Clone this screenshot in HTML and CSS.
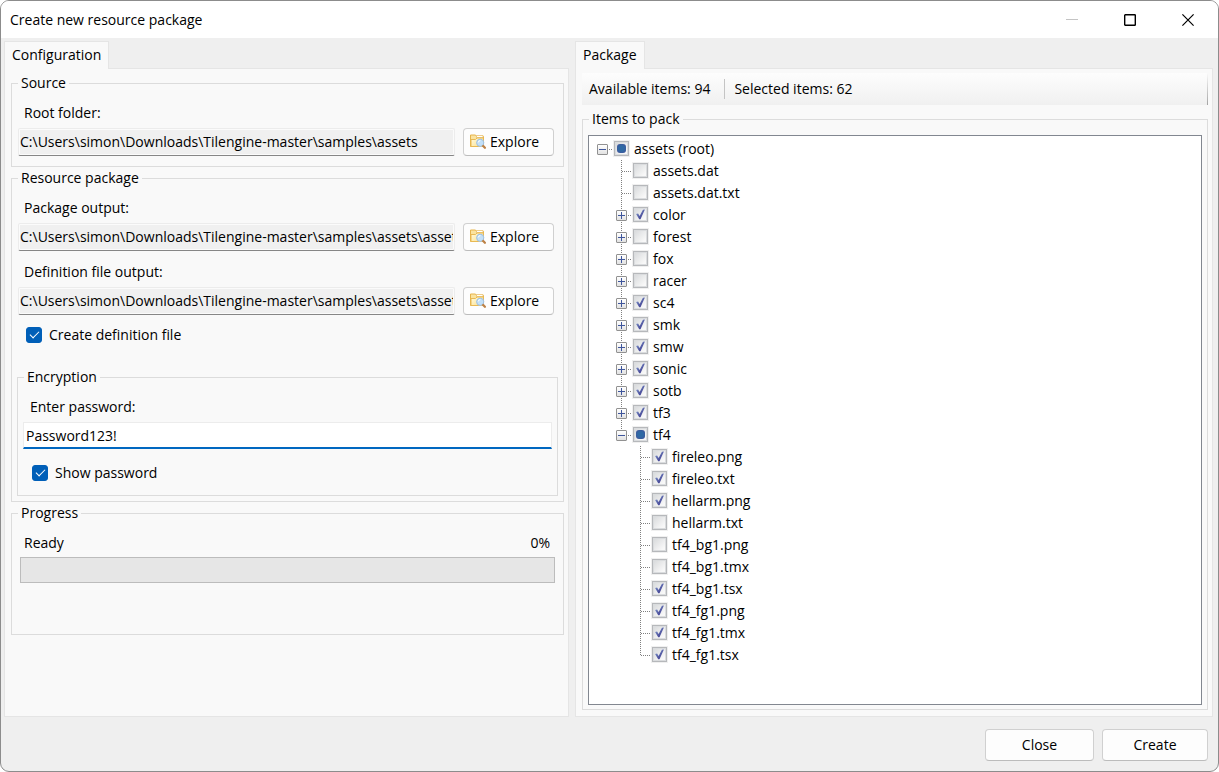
FILE: index.html
```html
<!DOCTYPE html>
<html lang="en">
<head>
<meta charset="utf-8">
<title>Create new resource package</title>
<link rel="stylesheet" href="styles.css">
</head>
<body>
<svg class="defs" aria-hidden="true">
  <defs>
    <linearGradient id="folder-fill" x1="0" y1="0" x2="1" y2="1">
      <stop offset="0" stop-color="#fffbe0"/>
      <stop offset="1" stop-color="#fbdf8c"/>
    </linearGradient>
  </defs>
  <symbol id="folder-search" viewBox="0 0 16 16">
    <path d="M.5 12.500v-11.500h5l1 1.500h7v10z" fill="#fae3a0" stroke="#e6b44c"/>
    <path d="M6.500 1.500h6.500v2h-6.500z" fill="#fff" stroke="#e6b95c" stroke-width=".7"/>
    <path d="M1 12.500V5.500h4.500l1.500-1.500h6.500v8.500z" fill="url(#folder-fill)" stroke="#e8b954"/>
    <circle cx="10.200" cy="8.800" r="3.600" fill="#c3e0f8" stroke="#9dbfe2"/>
    <path d="M8.300 8.400a2 2 0 0 1 2-1.800" fill="none" stroke="#fff"/>
    <path d="m13.200 12 1.700 1.800" stroke="#bd8248" stroke-width="2.200" stroke-linecap="round"/>
  </symbol>
</svg>

<div class="window">
  <header class="titlebar">
    <h1 class="title">Create new resource package</h1>
    <div class="caption">
      <button class="caption-button" aria-label="Minimize" disabled><svg width="12" height="12" viewBox="0 0 12 12"><path d="M0 5.500h12" stroke="#c4c4c4"/></svg></button>
      <button class="caption-button" aria-label="Maximize"><svg width="12" height="12" viewBox="0 0 12 12"><rect x=".7" y=".7" width="10.600" height="10.600" rx=".6" fill="none" stroke="#000" stroke-width="1.400"/></svg></button>
      <button class="caption-button" aria-label="Close window"><svg width="12" height="12" viewBox="0 0 12 12"><path d="m.4.4 11.200 11.200M11.600.4.4 11.600" stroke="#000" stroke-width="1.200"/></svg></button>
    </div>
  </header>

  <main class="panes">
    <section class="pane">
      <h2 class="tab">Configuration</h2>
      <div class="page">
        <fieldset class="group">
          <legend>Source</legend>
          <label class="field-label" for="root">Root folder:</label>
          <div class="field-row">
            <input class="path" id="root" type="text" readonly value="C:\Users\simon\Downloads\Tilengine-master\samples\assets">
            <button class="button explore"><svg class="icon"><use href="#folder-search"/></svg>Explore</button>
          </div>
        </fieldset>

        <fieldset class="group resource">
          <legend>Resource package</legend>
          <label class="field-label" for="output">Package output:</label>
          <div class="field-row">
            <input class="path" id="output" type="text" readonly value="C:\Users\simon\Downloads\Tilengine-master\samples\assets\assets.dat">
            <button class="button explore"><svg class="icon"><use href="#folder-search"/></svg>Explore</button>
          </div>
          <label class="field-label next" for="definition">Definition file output:</label>
          <div class="field-row">
            <input class="path" id="definition" type="text" readonly value="C:\Users\simon\Downloads\Tilengine-master\samples\assets\assets.dat.txt">
            <button class="button explore"><svg class="icon"><use href="#folder-search"/></svg>Explore</button>
          </div>
          <label class="option"><input class="tick" type="checkbox" checked>Create definition file</label>

          <fieldset class="group encryption">
            <legend>Encryption</legend>
            <label class="field-label" for="password">Enter password:</label>
            <div class="password-row"><input class="password" id="password" type="text" value="Password123!"></div>
            <label class="option"><input class="tick" type="checkbox" checked>Show password</label>
          </fieldset>
        </fieldset>

        <fieldset class="group progress">
          <legend>Progress</legend>
          <div class="progress-text"><label for="bar">Ready</label><span>0%</span></div>
          <div class="bar-row"><progress class="bar" id="bar" value="0" max="100"></progress></div>
        </fieldset>
      </div>
    </section>

    <section class="pane">
      <h2 class="tab">Package</h2>
      <div class="page">
        <div class="status"><span class="status-item">Available items: 94</span><span class="status-item">Selected items: 62</span></div>
        <fieldset class="group items">
          <legend>Items to pack</legend>
          <ul class="tree">
            <li class="node">
              <div class="row"><button class="toggle open" aria-label="Collapse assets"></button><label class="entry"><input class="mark partial" type="checkbox">assets (root)</label></div>
              <ul class="branch">
                <li class="node"><div class="row"><span class="stub"></span><label class="entry"><input class="mark" type="checkbox">assets.dat</label></div></li>
                <li class="node"><div class="row"><span class="stub"></span><label class="entry"><input class="mark" type="checkbox">assets.dat.txt</label></div></li>
                <li class="node"><div class="row"><button class="toggle" aria-label="Expand color"></button><label class="entry"><input class="mark" type="checkbox" checked>color</label></div></li>
                <li class="node"><div class="row"><button class="toggle" aria-label="Expand forest"></button><label class="entry"><input class="mark" type="checkbox">forest</label></div></li>
                <li class="node"><div class="row"><button class="toggle" aria-label="Expand fox"></button><label class="entry"><input class="mark" type="checkbox">fox</label></div></li>
                <li class="node"><div class="row"><button class="toggle" aria-label="Expand racer"></button><label class="entry"><input class="mark" type="checkbox">racer</label></div></li>
                <li class="node"><div class="row"><button class="toggle" aria-label="Expand sc4"></button><label class="entry"><input class="mark" type="checkbox" checked>sc4</label></div></li>
                <li class="node"><div class="row"><button class="toggle" aria-label="Expand smk"></button><label class="entry"><input class="mark" type="checkbox" checked>smk</label></div></li>
                <li class="node"><div class="row"><button class="toggle" aria-label="Expand smw"></button><label class="entry"><input class="mark" type="checkbox" checked>smw</label></div></li>
                <li class="node"><div class="row"><button class="toggle" aria-label="Expand sonic"></button><label class="entry"><input class="mark" type="checkbox" checked>sonic</label></div></li>
                <li class="node"><div class="row"><button class="toggle" aria-label="Expand sotb"></button><label class="entry"><input class="mark" type="checkbox" checked>sotb</label></div></li>
                <li class="node"><div class="row"><button class="toggle" aria-label="Expand tf3"></button><label class="entry"><input class="mark" type="checkbox" checked>tf3</label></div></li>
                <li class="node">
                  <div class="row"><button class="toggle open" aria-label="Collapse tf4"></button><label class="entry"><input class="mark partial" type="checkbox">tf4</label></div>
                  <ul class="branch">
                    <li class="node"><div class="row"><span class="stub"></span><label class="entry"><input class="mark" type="checkbox" checked>fireleo.png</label></div></li>
                    <li class="node"><div class="row"><span class="stub"></span><label class="entry"><input class="mark" type="checkbox" checked>fireleo.txt</label></div></li>
                    <li class="node"><div class="row"><span class="stub"></span><label class="entry"><input class="mark" type="checkbox" checked>hellarm.png</label></div></li>
                    <li class="node"><div class="row"><span class="stub"></span><label class="entry"><input class="mark" type="checkbox">hellarm.txt</label></div></li>
                    <li class="node"><div class="row"><span class="stub"></span><label class="entry"><input class="mark" type="checkbox">tf4_bg1.png</label></div></li>
                    <li class="node"><div class="row"><span class="stub"></span><label class="entry"><input class="mark" type="checkbox">tf4_bg1.tmx</label></div></li>
                    <li class="node"><div class="row"><span class="stub"></span><label class="entry"><input class="mark" type="checkbox" checked>tf4_bg1.tsx</label></div></li>
                    <li class="node"><div class="row"><span class="stub"></span><label class="entry"><input class="mark" type="checkbox" checked>tf4_fg1.png</label></div></li>
                    <li class="node"><div class="row"><span class="stub"></span><label class="entry"><input class="mark" type="checkbox" checked>tf4_fg1.tmx</label></div></li>
                    <li class="node"><div class="row"><span class="stub"></span><label class="entry"><input class="mark" type="checkbox" checked>tf4_fg1.tsx</label></div></li>
                  </ul>
                </li>
              </ul>
            </li>
          </ul>
        </fieldset>
      </div>
    </section>
  </main>

  <footer class="actions">
    <button class="button action">Close</button>
    <button class="button action">Create</button>
  </footer>
</div>
</body>
</html>
```
FILE: styles.css
```css
* { box-sizing: border-box; }

body {
  margin: 0;
  background: #fff;
  color: #000;
  font: 14px/20px "Segoe UI", "Open Sans", "Noto Sans", sans-serif;
}

button, input { font: inherit; color: inherit; }
h1, h2, ul { margin: 0; padding: 0; font: inherit; list-style: none; }

.defs { position: absolute; width: 0; height: 0; }

.window {
  display: flex;
  flex-direction: column;
  min-height: 100vh;
  border: 1px solid #8c8c8c;
  border-radius: 9px;
  background: #efefef;
  overflow: hidden;
}

/* Title bar */
.titlebar {
  display: flex;
  align-items: center;
  height: 37px;
  padding: 0 1px 0 9px;
  background: #fff;
}
.title { flex: 1; }
.caption { display: flex; }
.caption-button {
  display: grid;
  place-items: center;
  width: 58px;
  height: 36px;
  padding: 0;
  border: 0;
  background: none;
}

/* Tabbed panes */
.panes {
  flex: 1;
  display: grid;
  grid-template-columns: 565fr 638fr;
  gap: 6px;
  padding: 3px 5px 0 3px;
}
.pane { display: flex; flex-direction: column; min-width: 0; }
.tab {
  position: relative;
  z-index: 1;
  align-self: flex-start;
  height: 28px;
  margin-bottom: -1px;
  padding: 3px 7px 0;
  border: 1px solid #e5e5e5;
  border-bottom: 0;
  background: #f9f9f9;
}
.page {
  flex: 1;
  display: flex;
  flex-direction: column;
  padding: 4px 4px 6px 6px;
  border: 1px solid #e5e5e5;
  background: #f9f9f9;
}

/* Group boxes */
.group {
  min-width: 0;
  margin: 0 0 1px;
  padding: 10px 0;
  border: 1px solid #dcdcdc;
}
.group legend { margin-left: 6px; padding: 0 3px; }

.field-label { display: block; padding-left: 12px; margin-bottom: 5px; }
.field-label.next { margin-top: 11px; }
.field-row { display: flex; gap: 8px; padding: 0 9px 0 6px; }

.path, .password {
  flex: 1;
  min-width: 0;
  height: 28px;
  padding: 0 1px 1px;
  border: 1px solid #ececec;
  outline: 0;
}
.path {
  border-bottom-color: #868686;
  border-radius: 2px;
  background: #f0f0f0;
  box-shadow: inset 0 0 0 1px #fbfbfb;
}
.password-row { display: flex; padding: 0 5px; }
.password { height: 27px; border-bottom: 2px solid #0067c0; background: #fff; padding: 0 2px; }

.button {
  display: flex;
  align-items: center;
  justify-content: center;
  border: 1px solid #d0d0d0;
  border-bottom-color: #bcbcbc;
  border-radius: 4px;
  background: #fdfdfd;
}
.explore { width: 91px; gap: 4px; padding: 0 0 0 6px; justify-content: flex-start; }
.icon { width: 16px; height: 16px; }

.option {
  display: flex;
  align-items: center;
  gap: 7px;
  margin-top: 10px;
  padding-left: 14px;
}
.tick {
  display: grid;
  place-items: center;
  width: 16px;
  height: 16px;
  margin: 0;
  appearance: none;
  border: 1px solid #868686;
  border-radius: 3px;
  background: #fff;
}
.tick:checked { border-color: #005fb8; background: #005fb8; }
.tick:checked::before {
  content: "";
  width: 8px;
  height: 4px;
  margin-bottom: 3px;
  border: solid #fff;
  border-width: 0 0 1px 1px;
  transform: rotate(-45deg);
}

.resource { padding-bottom: 4px; }
.encryption { margin: 22px 5px 1px; padding-bottom: 12px; }
.encryption .option { margin-top: 14px; }

.progress { padding-bottom: 51px; }
.progress-text {
  display: flex;
  justify-content: space-between;
  padding: 0 13px 0 12px;
}
.bar-row { display: flex; padding: 4px 8px 0; }
.bar {
  flex: 1;
  height: 26px;
  appearance: none;
  border: 1px solid #bcbcbc;
  background: #e6e6e6;
}
.bar::-webkit-progress-bar { background: #e6e6e6; }
.bar::-webkit-progress-value { background: #06b025; }

/* Item counts */
.status {
  display: flex;
  align-items: center;
  height: 32px;
  margin-bottom: 4px;
  padding-left: 7px;
  border-right: 1px solid;
  border-image: linear-gradient(#fdfdfd, #a0a0a0) 1;
  background: linear-gradient(#fdfdfd, #f0f0f0);
}
.status-item + .status-item {
  margin-left: 14px;
  padding-left: 9px;
  border-left: 1px solid #c4c4c4;
}

/* Item tree */
.group.items { flex: 1; display: flex; padding: 6px 5px 4px; margin: 0; }
.items legend { margin-left: 1px; }
.tree {
  flex: 1;
  padding: 2px 8px 16px;
  border: 1px solid #828790;
  background: #fff;
}
.branch { padding-left: 19px; }
.node { position: relative; }
.branch > .node::before {
  content: "";
  position: absolute;
  top: 0;
  bottom: 0;
  left: 5px;
  width: 1px;
  background: repeating-linear-gradient(#808080 0 1px, #fff 1px 2px);
}
.branch > .node:last-child::before { bottom: auto; height: 12px; }
.row {
  display: flex;
  align-items: center;
  gap: 5px;
  height: 22px;
  background: repeating-linear-gradient(90deg, #808080 0 1px, transparent 1px 2px) 6px 11px / 9px 1px no-repeat;
}
.stub { width: 11px; }
.toggle {
  position: relative;
  width: 11px;
  height: 11px;
  margin-top: 1px;
  padding: 0;
  border: 1px solid #919191;
  border-radius: 1px;
  background:
    linear-gradient(#3f569c, #3f569c) 1px 4px / 7px 1px no-repeat,
    linear-gradient(#3f569c, #3f569c) 4px 1px / 1px 7px no-repeat,
    linear-gradient(#fff, #e2e2e2);
}
.toggle.open {
  background:
    linear-gradient(#3f569c, #3f569c) 1px 4px / 7px 1px no-repeat,
    linear-gradient(#fff, #e2e2e2);
}
.entry { display: flex; align-items: center; gap: 4px; }
.mark {
  display: grid;
  place-items: center;
  width: 17px;
  height: 17px;
  margin: 0 0 1px;
  padding: 1px;
  appearance: none;
  border: 1px solid #f0f0f0;
  background:
    linear-gradient(135deg, #d6d8da, #f8f8f8 80%) content-box,
    #b6b8bb;
  box-shadow: inset 0 0 0 1px #b6b8bb, inset 0 0 0 2px #dadcde;
}
.mark::before { content: ""; width: 11px; height: 11px; }
.mark:checked::before {
  background: linear-gradient(135deg, #8fb0dc, #4a4c9a 65%);
  clip-path: polygon(10% 46%, 28% 42%, 42% 64%, 72% 6%, 90% 4%, 50% 94%, 38% 94%);
}
.mark.partial::before {
  width: 9px;
  height: 9px;
  border-radius: 3px;
  background: radial-gradient(#2f69a4 40%, #454e98);
}

/* Bottom actions */
.actions {
  display: flex;
  justify-content: flex-end;
  gap: 8px;
  padding: 12px 10px 10px;
}
.action { min-width: 106px; height: 32px; }
.action:first-child { min-width: 109px; }
```
